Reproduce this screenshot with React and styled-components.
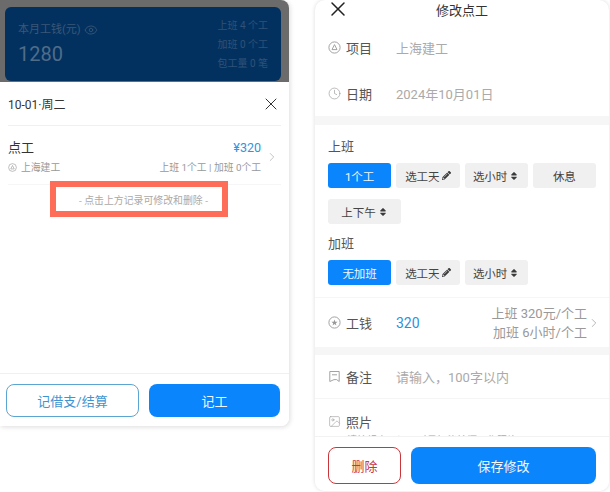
import React from 'react';
import styled, { createGlobalStyle } from 'styled-components';
import { X, Eye, Clock, Image as ImageIcon, ChevronRight } from 'lucide-react';
import { FaPencilAlt, FaSort } from 'react-icons/fa';

const GlobalStyle = createGlobalStyle`
  html, body {
    margin: 0;
    padding: 0;
    background: #fff;
    font-family: Roboto, "Noto Sans CJK SC", sans-serif;
  }
  * { box-sizing: border-box; }
`;

const Page = styled.div`
  width: 610px;
  height: 492px;
  display: flex;
  align-items: flex-start;
  gap: 26px;
  overflow: hidden;
`;

/* left phone */
const LeftPhone = styled.div`
  width: 289px;
  height: 426px;
  display: flex;
  flex-direction: column;
  border-radius: 0 8px 8px 0;
  box-shadow: 1px 1px 5px rgba(0, 0, 0, 0.14);
  overflow: hidden;
`;

const Dimmed = styled.div`
  height: 82px;
  flex: none;
  background: #6b6b6b;
  padding: 7px 8px 1px 5px;
`;

const WageCard = styled.div`
  height: 74px;
  background: #03315f;
  border-radius: 6px;
  padding: 0 13px;
  display: flex;
  justify-content: space-between;
  align-items: center;
  color: #2f5279;
`;

const WageLabel = styled.div`
  font-size: 11px;
  display: flex;
  align-items: center;
  gap: 3px;
  line-height: 16px;
  color: #3a5878;
`;

const WageAmount = styled.div`
  font-size: 20px;
  line-height: 26px;
  margin-top: 3px;
  color: #4f6c88;
`;

const WageStats = styled.div`
  font-size: 10px;
  line-height: 19px;
  text-align: right;
`;

const Sheet = styled.div`
  flex: 1;
  background: #fff;
  display: flex;
  flex-direction: column;
  position: relative;
`;

const SheetHeader = styled.div`
  height: 44px;
  margin: 0 8px;
  display: flex;
  align-items: center;
  justify-content: space-between;
  border-bottom: 1px solid #f0f0f0;
  font-size: 12px;
  color: #333;
`;

const Record = styled.div`
  height: 59px;
  margin: 0 8px;
  display: flex;
  align-items: center;
  border-bottom: 1px solid #f6f6f6;
  padding-top: 3px;
`;

const RecordBody = styled.div`
  flex: 1;
  min-width: 0;
`;

const RecordLine = styled.div`
  display: flex;
  justify-content: space-between;
  align-items: center;
`;

const RecordTitle = styled.span`
  font-size: 13px;
  line-height: 22px;
  color: #333;
`;

const RecordAmount = styled.span`
  font-size: 12.5px;
  color: #2f95e0;
`;

const RecordMeta = styled.span`
  font-size: 9.8px;
  line-height: 18px;
  color: #999;
  display: flex;
  align-items: center;
  gap: 4px;
`;

const RecordArrow = styled(ChevronRight)`
  flex: none;
  margin: 0 2px 0 4px;
  color: #aaa;
`;

const Hint = styled.div`
  text-align: center;
  font-size: 9.9px;
  line-height: 16px;
  color: #aaa;
  margin: 8px 2px 0 0;
`;

const Annotation = styled.div`
  position: absolute;
  left: 50px;
  top: 99px;
  width: 178px;
  height: 36px;
  border: 6px solid #fd6d58;
`;

const SheetFooter = styled.div`
  margin-top: auto;
  height: 53px;
  border-top: 1px solid #f0f0f0;
  padding: 10px 9px 9px 6px;
  display: flex;
  gap: 10px;
`;

const Action = styled.div`
  flex: ${p => p.$flex || 1};
  height: ${p => p.$h || 33}px;
  border-radius: 8px;
  display: flex;
  align-items: center;
  justify-content: center;
  font-size: 13px;
  background: ${p => (p.$solid ? '#0b85fb' : '#fff')};
  color: ${p => (p.$solid ? '#f2f8ff' : p.$color || '#3f95d2')};
  border: ${p => (p.$solid ? 'none' : `1px solid ${p.$color || '#5aa5d2'}`)};
`;

/* right phone */
const RightPhone = styled.div`
  width: 294px;
  height: 491px;
  background: #fff;
  border-radius: 10px;
  box-shadow: 0 0 4px rgba(0, 0, 0, 0.14);
  display: flex;
  flex-direction: column;
  overflow: hidden;
`;

const TopBar = styled.div`
  height: 20px;
  flex: none;
  position: relative;
  display: flex;
  align-items: center;
  justify-content: center;
  padding-bottom: 2px;
  font-size: 13px;
  color: #333;
`;

const CloseButton = styled(X)`
  position: absolute;
  left: 11px;
  top: -3px;
`;

const Scroll = styled.div`
  flex: 1;
  min-height: 0;
  overflow: hidden;
`;

const Field = styled.div`
  height: ${p => p.$h}px;
  display: flex;
  align-items: center;
  padding: ${p => p.$pt || 0}px 13px ${p => p.$pb || 0}px;
  font-size: 13px;
  color: #555;
  border-bottom: ${p => (p.$line ? '1px solid #f5f5f5' : 'none')};
`;

const FieldLabel = styled.div`
  width: 68px;
  flex: none;
  display: flex;
  align-items: center;
  gap: 5px;
`;

const FieldIcon = styled.span`
  width: ${p => p.$s || 13}px;
  height: ${p => p.$s || 13}px;
  flex: none;
  display: flex;
  color: #999;
`;

const FieldValue = styled.span`
  font-size: ${p => (p.$blue ? 14 : 13)}px;
  color: ${p => (p.$blue ? '#2f8fdc' : '#aaa')};
`;

const Band = styled.div`
  height: ${p => p.$h || 9}px;
  background: #f6f6f6;
`;

const WorkSection = styled.div`
  padding: 13px 13px 12px;
  border-bottom: 1px solid #f6f6f6;
`;

const SectionLabel = styled.div`
  font-size: 13px;
  line-height: 18px;
  color: #555;
  margin-bottom: 7px;
`;

const Chips = styled.div`
  display: flex;
  flex-wrap: wrap;
  gap: 11px 5px;
  margin-bottom: ${p => p.$mb || 0}px;
`;

const Chip = styled.div`
  width: ${p => p.$w || 63.25}px;
  height: 25px;
  border-radius: 3px;
  display: flex;
  align-items: center;
  justify-content: center;
  gap: 2px;
  font-size: 11.5px;
  background: ${p => (p.$active ? '#0b85fb' : '#f0f0f0')};
  color: ${p => (p.$active ? '#f2f8ff' : '#444')};
  svg { color: #3a3a3a; flex: none; }
`;

const RateNote = styled.div`
  margin-left: auto;
  font-size: 13px;
  line-height: 19px;
  color: #999;
  text-align: right;
`;

const RateArrow = styled(ChevronRight)`
  flex: none;
  margin-right: -5px;
  color: #999;
`;

const PhotoNote = styled.div`
  font-size: 10px;
  line-height: 14px;
  color: #aaa;
  padding-left: 32px;
  margin-top: -9px;
  white-space: nowrap;
`;

const BottomBar = styled.div`
  flex: none;
  height: 55px;
  padding: 10px 13px 8px;
  display: flex;
  gap: 10px;
  border-top: 1px solid #f2f2f2;
  background: #fff;
`;

const ProjectGlyph = ({ size = 13 }) => (
  <svg width={size} height={size} viewBox="0 0 13 13" fill="none" stroke="currentColor" strokeWidth="0.9">
    <circle cx="6.5" cy="6.5" r="5.6" />
    <path d="M6.5 3.6 L4 8.6 H9 Z" />
  </svg>
);

const WageGlyph = () => (
  <svg width="13" height="13" viewBox="0 0 13 13" fill="none" stroke="currentColor" strokeWidth="0.9">
    <circle cx="6.5" cy="6.5" r="5.6" />
    <path d="M6.5 3.4 L7.3 5.7 L9.6 5.7 L7.8 7.2 L8.4 9.4 L6.5 8.1 L4.6 9.4 L5.2 7.2 L3.4 5.7 L5.7 5.7 Z" fill="currentColor" stroke="none" />
  </svg>
);

const NoteGlyph = () => (
  <svg width="13" height="13" viewBox="0 0 13 13" fill="none" stroke="currentColor" strokeWidth="0.9">
    <path d="M1.8 1.5 H11.2 V11.5 L8.6 9.6 H6 L1.8 11.5 Z" />
    <path d="M4 4.8 H9" />
  </svg>
);

export default function App() {
  return (
    <>
      <GlobalStyle />
      <Page>
        <LeftPhone>
          <Dimmed>
            <WageCard>
              <div>
                <WageLabel>
                  本月工钱(元)
                  <Eye size={14} strokeWidth={1.4} />
                </WageLabel>
                <WageAmount>1280</WageAmount>
              </div>
              <WageStats>
                <div>上班 4 个工</div>
                <div>加班 0 个工</div>
                <div>包工量 0 笔</div>
              </WageStats>
            </WageCard>
          </Dimmed>
          <Sheet>
            <SheetHeader>
              <span>10-01·周二</span>
              <X size={20} strokeWidth={1.2} color="#333" />
            </SheetHeader>
            <Record>
              <RecordBody>
                <RecordLine>
                  <RecordTitle>点工</RecordTitle>
                  <RecordAmount>¥320</RecordAmount>
                </RecordLine>
                <RecordLine>
                  <RecordMeta>
                    <FieldIcon $s={9}><ProjectGlyph size={9} /></FieldIcon>
                    上海建工
                  </RecordMeta>
                  <RecordMeta>上班 1个工 | 加班 0个工</RecordMeta>
                </RecordLine>
              </RecordBody>
              <RecordArrow size={14} strokeWidth={1.2} />
            </Record>
            <Hint>- 点击上方记录可修改和删除 -</Hint>
            <Annotation />
            <SheetFooter>
              <Action>记借支/结算</Action>
              <Action $solid>记工</Action>
            </SheetFooter>
          </Sheet>
        </LeftPhone>

        <RightPhone>
          <TopBar>
            <CloseButton size={24} strokeWidth={1.5} color="#222" />
            修改点工
          </TopBar>
          <Scroll>
            <Field $h={52} $pt={5} $pb={3}>
              <FieldLabel>
                <FieldIcon><ProjectGlyph /></FieldIcon>
                项目
              </FieldLabel>
              <FieldValue>上海建工</FieldValue>
            </Field>
            <Field $h={44} $pb={2}>
              <FieldLabel>
                <FieldIcon><Clock size={13} strokeWidth={1.2} /></FieldIcon>
                日期
              </FieldLabel>
              <FieldValue>2024年10月01日</FieldValue>
            </Field>
            <Band />
            <WorkSection>
              <SectionLabel>上班</SectionLabel>
              <Chips $mb={11}>
                <Chip $active>1个工</Chip>
                <Chip>选工天<FaPencilAlt size={9} /></Chip>
                <Chip>选小时<FaSort size={10} /></Chip>
                <Chip>休息</Chip>
                <Chip $w={73}>上下午<FaSort size={10} /></Chip>
              </Chips>
              <SectionLabel>加班</SectionLabel>
              <Chips>
                <Chip $active>无加班</Chip>
                <Chip>选工天<FaPencilAlt size={9} /></Chip>
                <Chip>选小时<FaSort size={10} /></Chip>
              </Chips>
            </WorkSection>
            <Field $h={49}>
              <FieldLabel>
                <FieldIcon><WageGlyph /></FieldIcon>
                工钱
              </FieldLabel>
              <FieldValue $blue>320</FieldValue>
              <RateNote>
                <div>上班 320元/个工</div>
                <div>加班 6小时/个工</div>
              </RateNote>
              <RateArrow size={14} strokeWidth={1.2} />
            </Field>
            <Band $h={8} />
            <Field $h={44} $line>
              <FieldLabel>
                <FieldIcon><NoteGlyph /></FieldIcon>
                备注
              </FieldLabel>
              <FieldValue>请输入，100字以内</FieldValue>
            </Field>
            <Field $h={44}>
              <FieldLabel>
                <FieldIcon><ImageIcon size={13} strokeWidth={1.1} /></FieldIcon>
                照片
              </FieldLabel>
            </Field>
            <PhotoNote>请按规定，记工时最好能拍摄工作照片</PhotoNote>
          </Scroll>
          <BottomBar>
            <Action $flex="0 0 73px" $h={37} $color="#c8363a">删除</Action>
            <Action $solid $h={37}>保存修改</Action>
          </BottomBar>
        </RightPhone>
      </Page>
    </>
  );
}
